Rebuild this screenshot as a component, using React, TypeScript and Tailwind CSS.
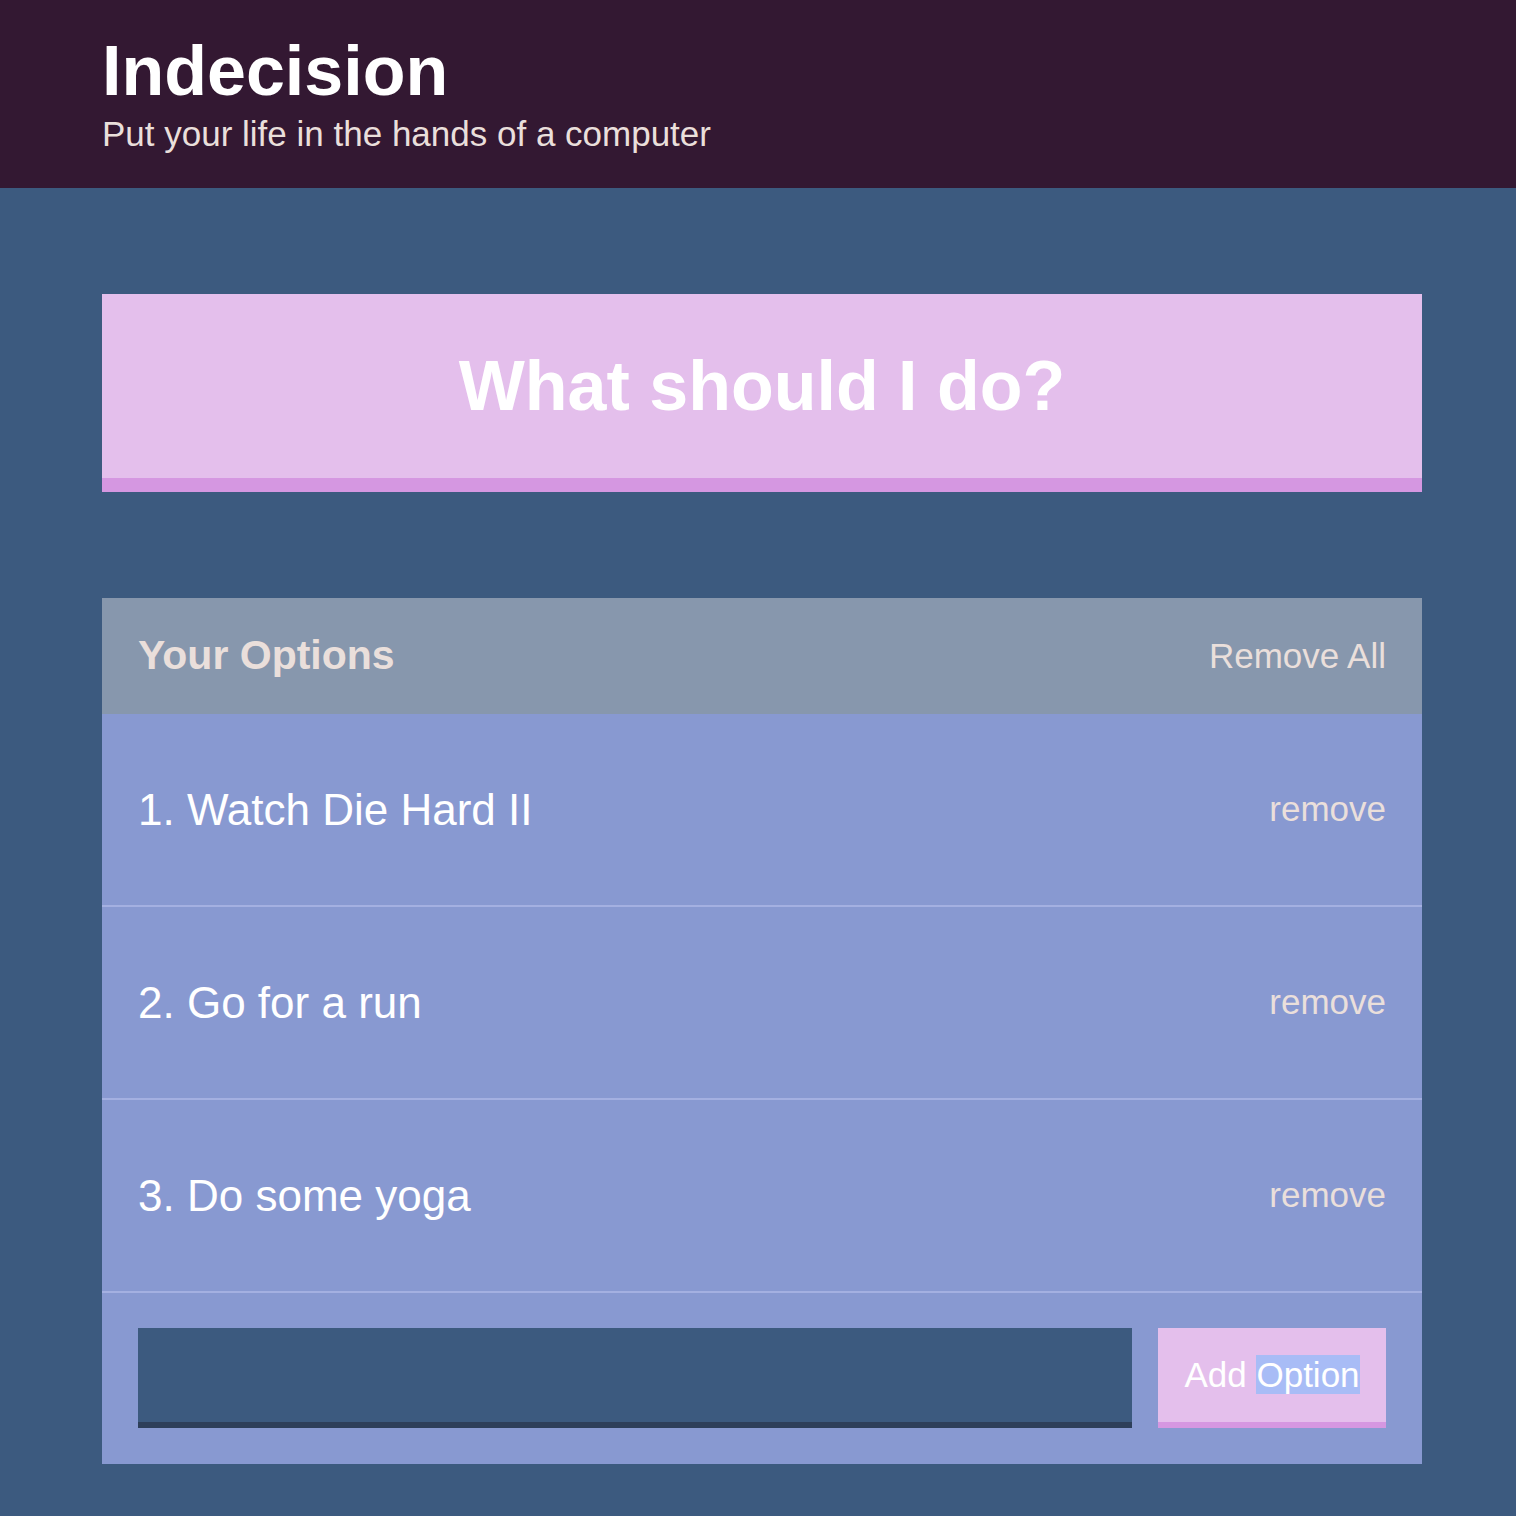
import React from 'react';

const options = ['Watch Die Hard II', 'Go for a run', 'Do some yoga'];

const App: React.FC = () => {
  return (
    <div className="min-h-[1516px] w-full bg-[#3c5a7f] font-['Liberation_Sans',Arial,sans-serif]">
      <header className="h-[188px] bg-[#331832] px-[102px] pt-[31px]">
        <h1 className="text-[70px] font-bold leading-[80px] text-white">Indecision</h1>
        <h2 className="text-[35px] leading-[46px] text-[#eadfdb]">Put your life in the hands of a computer</h2>
      </header>

      <main className="pl-[102px] pr-[94px] pt-[106px]">
        <button className="h-[198px] w-full border-b-[14px] border-[#d597e1] bg-[#e4bfec] text-[70px] font-bold text-white">
          What should I do?
        </button>

        <div className="mt-[106px]">
          <div className="flex h-[116px] items-center justify-between bg-[#8797ad] px-[36px]">
            <h3 className="text-[41px] font-bold text-[#eadfdb]">Your Options</h3>
            <button className="text-[35px] text-[#eadfdb]">Remove All</button>
          </div>

          <div className="bg-[#8899d1]">
            {options.map((option, i) => (
              <div
                key={option}
                className="flex h-[193px] items-center justify-between border-b-2 border-[#a4b0e1] px-[36px]"
              >
                <p className="text-[44px] text-white">
                  {i + 1}. {option}
                </p>
                <button className="text-[35px] text-[#eadfdb]">remove</button>
              </div>
            ))}

            <form className="flex gap-[26px] px-[36px] pb-[36px] pt-[35px]" onSubmit={e => e.preventDefault()}>
              <input
                type="text"
                className="h-[100px] flex-1 border-b-[6px] border-[#2e3f5a] bg-[#3c5a7f] outline-none"
              />
              <button className="h-[100px] w-[228px] border-b-[6px] border-[#d597e1] bg-[#e4bfec] text-[35px] text-white">
                Add <span className="bg-[#a8bcf6]">Option</span>
              </button>
            </form>
          </div>
        </div>
      </main>
    </div>
  );
};

export default App;
